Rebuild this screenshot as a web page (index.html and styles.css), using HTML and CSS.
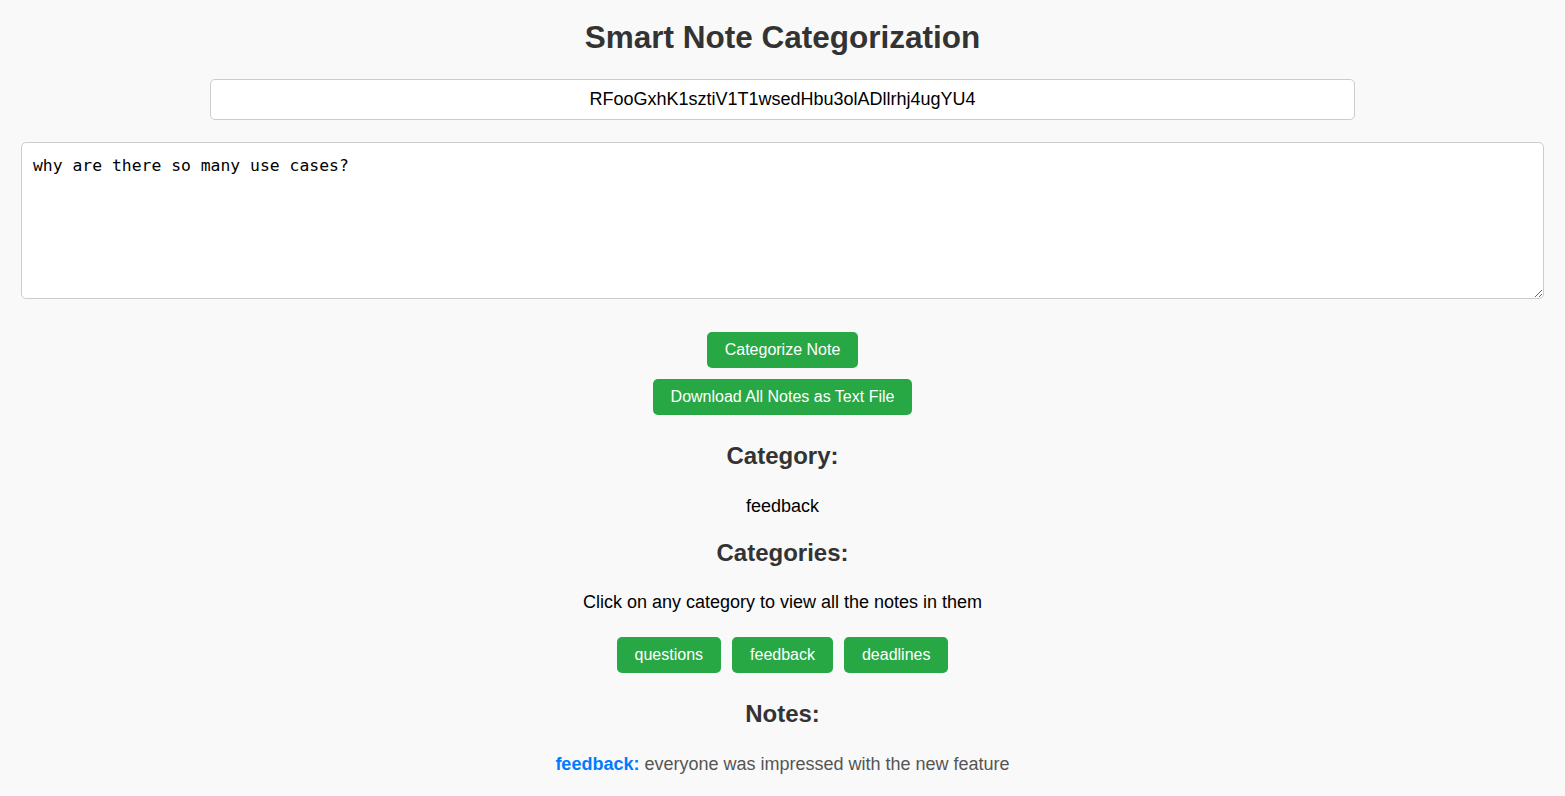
FILE: index.html
```html
<!DOCTYPE html>
<html lang="en">
<head>
<meta charset="utf-8">
<title>Smart Note Categorization</title>
<link rel="stylesheet" href="styles.css">
</head>
<body>
<main class="app">
  <h1 class="title">Smart Note Categorization</h1>
  <input class="key-input" type="text" value="RFooGxhK1sztiV1T1wsedHbu3olADllrhj4ugYU4">
  <textarea class="note-input">why are there so many use cases?</textarea>
  <div class="actions">
    <button class="btn">Categorize Note</button>
    <button class="btn">Download All Notes as Text File</button>
  </div>
  <h2 class="section-title section-first">Category:</h2>
  <p class="text text-first">feedback</p>
  <h2 class="section-title">Categories:</h2>
  <p class="text">Click on any category to view all the notes in them</p>
  <div class="cat-list">
    <button class="btn">questions</button>
    <button class="btn">feedback</button>
    <button class="btn">deadlines</button>
  </div>
  <h2 class="section-title section-after-list">Notes:</h2>
  <div class="note"><span class="note-cat">feedback:</span> everyone was impressed with the new feature</div>
</main>
</body>
</html>
```

FILE: styles.css
```css
html, body {
  margin: 0;
  padding: 0;
  background: #f9f9f9;
}
.app {
  font-family: "Liberation Sans", Arial, sans-serif;
  padding: 19px 20px 20px;
  display: flex;
  flex-direction: column;
  align-items: center;
  text-align: center;
}
.title {
  margin: 0 0 23px;
  font-size: 31.5px;
  font-weight: bold;
  color: #333;
  line-height: 37px;
}
.key-input {
  box-sizing: border-box;
  width: calc(75% + 1px);
  height: 41px;
  padding: 0 10px;
  border: 1px solid #ccc;
  border-radius: 5px;
  background: #fff;
  font-family: "Liberation Sans", Arial, sans-serif;
  font-size: 18px;
  color: #000;
  text-align: center;
  margin: 0 0 22px;
}
.note-input {
  box-sizing: border-box;
  width: calc(100% - 2px);
  height: 157px;
  padding: 13px 11px;
  border: 1px solid #ccc;
  border-radius: 5px;
  background: #fff;
  font-family: "DejaVu Sans Mono", "Liberation Mono", monospace;
  font-size: 16.4px;
  color: #000;
  margin: 0 0 33px;
  resize: vertical;
}
.actions {
  display: flex;
  flex-direction: column;
  align-items: center;
  gap: 11px;
}
.btn {
  background: #28a745;
  color: #fff;
  border: none;
  border-radius: 5px;
  padding: 9px 18px;
  font-family: "Liberation Sans", Arial, sans-serif;
  font-size: 16px;
  line-height: 18px;
  cursor: pointer;
}
.section-title {
  margin: 22px 0 0;
  font-size: 24px;
  line-height: 28px;
  color: #333;
}
.section-first {
  margin-top: 27px;
}
.section-after-list {
  margin-top: 27px;
}
.text {
  margin: 25px 0 0;
  font-size: 18px;
  line-height: 21px;
  color: #000;
}
.text-first {
  margin-top: 26px;
}
.cat-list {
  display: flex;
  gap: 11px;
  margin-top: 24px;
}
.note {
  margin-top: 26px;
  font-size: 18px;
  line-height: 21px;
  color: #555;
}
.note-cat {
  color: #007bff;
  font-weight: bold;
}
```
